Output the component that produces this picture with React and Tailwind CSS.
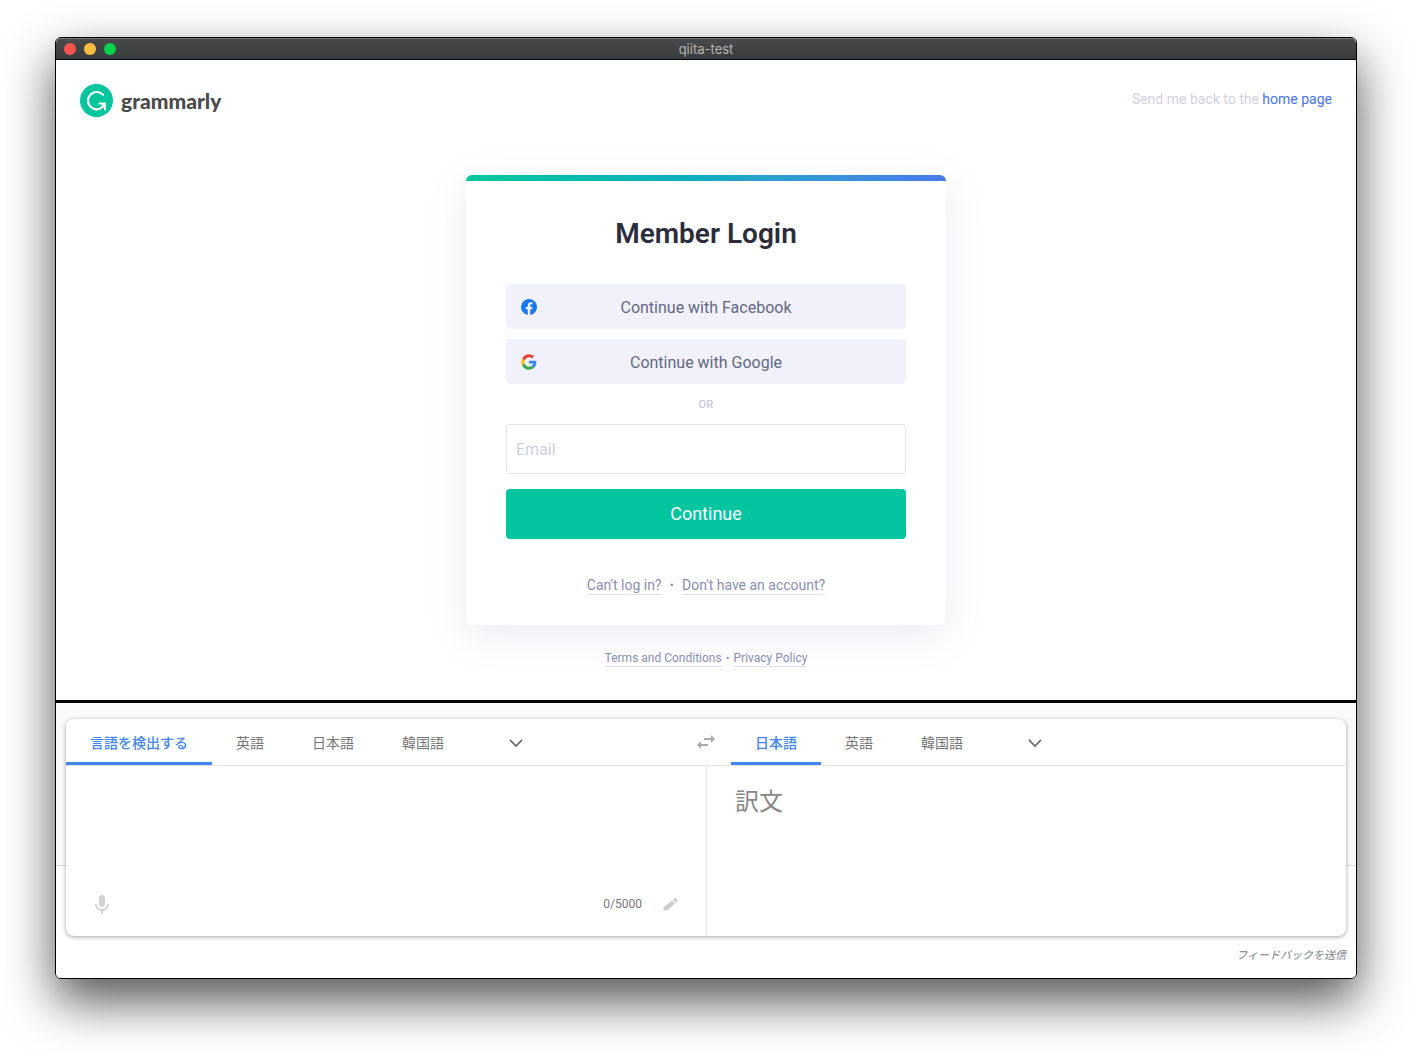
import React from 'react';
import { MdMic, MdSwapHoriz } from 'react-icons/md';

const sourceTabs = ['言語を検出する', '英語', '日本語', '韓国語'];
const targetTabs = ['日本語', '英語', '韓国語'];

function TitleBar() {
  return (
    <header className="relative flex h-[22px] items-center gap-2 rounded-t-[5px] border-b border-black bg-linear-to-b from-[#484a4b] to-[#3a3b3c] px-2 shadow-[inset_0_1px_0_#777879]">
      <button aria-label="Close" className="size-3 rounded-full bg-[#ff544d]" />
      <button aria-label="Minimize" className="size-3 rounded-full bg-[#ffbd3f]" />
      <button aria-label="Zoom" className="size-3 rounded-full bg-[#00d04b]" />
      <span className="pointer-events-none absolute inset-x-0 text-center font-[Inter] text-[13px] leading-5 text-[#b4b5b5]">
        qiita-test
      </span>
    </header>
  );
}

function Logo() {
  return (
    <a href="#" className="flex items-center gap-2">
      <svg viewBox="0 0 33 33" className="size-[33px]" fill="none">
        <circle cx="16.5" cy="16.5" r="16.5" fill="#00c59d" />
        <path d="M23.2 10.9A8.7 8.7 0 1 0 22.6 23" stroke="#fff" strokeWidth="2.1" strokeLinecap="round" />
        <path d="M18.6 18.6H26V26.2H24.1V22.9L22.4 24.6L20.8 23.1L22.6 20.6H18.6Z" fill="#fff" />
      </svg>
      <span className="font-[Lato] text-[21px] leading-6 font-black text-[#4a4a4a]">grammarly</span>
    </a>
  );
}

function FacebookIcon() {
  return (
    <svg viewBox="0 0 16 16" className="size-4">
      <path
        fill="#1877f2"
        d="M16 8a8 8 0 1 0-9.25 7.9v-5.59H4.72V8h2.03V6.24c0-2 1.2-3.11 3.02-3.11.88 0 1.79.15 1.79.15v1.97h-1c-1 0-1.31.62-1.31 1.25V8h2.22l-.36 2.31H9.25v5.6A8 8 0 0 0 16 8z"
      />
    </svg>
  );
}

function GoogleIcon() {
  return (
    <svg viewBox="-1 -1 50 50" className="size-4">
      <path
        fill="#ea4335"
        d="M24 9.5c3.54 0 6.71 1.22 9.21 3.6l6.85-6.85C35.9 2.38 30.47 0 24 0 14.62 0 6.51 5.38 2.56 13.22l7.98 6.19C12.43 13.72 17.74 9.5 24 9.5z"
      />
      <path
        fill="#4285f4"
        d="M46.98 24.55c0-1.57-.15-3.09-.38-4.55H24v9.02h12.94c-.58 2.96-2.26 5.48-4.78 7.18l7.73 6c4.51-4.18 7.09-10.36 7.09-17.65z"
      />
      <path
        fill="#fbbc05"
        d="M10.53 28.59c-.48-1.45-.76-2.99-.76-4.59s.27-3.14.76-4.59l-7.98-6.19C.92 16.46 0 20.12 0 24c0 3.88.92 7.54 2.56 10.78l7.97-6.19z"
      />
      <path
        fill="#34a853"
        d="M24 48c6.48 0 11.93-2.13 15.89-5.81l-7.73-6c-2.15 1.45-4.92 2.3-8.16 2.3-6.26 0-11.57-4.22-13.47-9.91l-7.98 6.19C6.51 42.62 14.62 48 24 48z"
      />
    </svg>
  );
}

function SocialButton({ icon, children }) {
  return (
    <button className="flex h-[45px] w-full items-center rounded bg-[#f1f1fb] px-[15px] text-[#646882]">
      {icon}
      <span className="flex-1 pt-0.5 pr-4 text-center text-base">{children}</span>
    </button>
  );
}

function TextLink({ children }) {
  return (
    <a href="#" className="border-b border-[#dfe0f0]">
      {children}
    </a>
  );
}

function LoginCard() {
  return (
    <form className="w-[480px] overflow-hidden rounded-md bg-white shadow-[0_10px_40px_rgba(109,120,167,0.14)]">
      <div className="h-1.5 bg-linear-to-r from-[#00c79c] via-[#10acbf] to-[#4a78ee]" />
      <div className="px-10 pt-[33px] pb-[30px]">
        <h1 className="text-center text-[28px] leading-10 font-semibold text-[#2b2d3c]">Member Login</h1>
        <div className="mt-[30px] flex flex-col gap-2.5">
          <SocialButton icon={<FacebookIcon />}>Continue with Facebook</SocialButton>
          <SocialButton icon={<GoogleIcon />}>Continue with Google</SocialButton>
        </div>
        <p className="h-10 text-center text-[11px] leading-[42px] font-medium tracking-wide text-[#c6c9e0]">OR</p>
        <input
          type="email"
          aria-label="Email"
          placeholder="Email"
          className="block h-[50px] w-full rounded-[3px] border border-[#e4e4f2] px-[9px] text-base outline-none placeholder:text-[#cdd0e2]"
        />
        <button className="mt-[15px] h-[50px] w-full rounded bg-[#00c59f] text-lg text-white">Continue</button>
        <p className="mt-[37px] flex justify-center gap-2 text-sm leading-[18px] text-[#8a8fb2]">
          <TextLink>Can't log in?</TextLink>
          <span className="font-black">·</span>
          <TextLink>Don't have an account?</TextLink>
        </p>
      </div>
    </form>
  );
}

function LoginPage() {
  return (
    <section className="flex flex-col items-center bg-white px-6 pt-6 pb-[33px] font-[Roboto]">
      <div className="flex w-full items-center justify-between">
        <Logo />
        <p className="pb-[3px] text-sm text-[#d0d2e4]">
          Send me back to the{' '}
          <a href="#" className="text-[#4a72ee]">
            home page
          </a>
        </p>
      </div>
      <div className="mt-[58px]">
        <LoginCard />
      </div>
      <p className="mt-[25px] flex gap-1 text-xs leading-4 text-[#8a8fb2]">
        <TextLink>Terms and Conditions</TextLink>
        <span className="font-black">·</span>
        <TextLink>Privacy Policy</TextLink>
      </p>
    </section>
  );
}

function LanguageTabs({ tabs }) {
  return (
    <div className="flex flex-1 items-stretch text-sm">
      {tabs.map((tab, i) => (
        <button
          key={tab}
          className={`border-b-3 px-6 pt-[5px] ${i === 0 ? 'border-[#4285f4] font-medium text-[#4285f4]' : 'border-transparent text-[#777]'}`}
        >
          {tab}
        </button>
      ))}
      <button aria-label="More languages" className="px-[38px] pt-0.5 text-[#6f6f6f]">
        <svg viewBox="0 0 24 24" className="size-5" fill="currentColor">
          <path d="M5.41 7.59 4 9l8 8 8-8-1.41-1.41L12 14.17z" />
        </svg>
      </button>
    </div>
  );
}

function Translator() {
  return (
    <section className="relative border-t-3 border-black bg-white px-2.5 pt-4 pb-3.5 font-['Roboto','Noto_Sans_CJK_JP',sans-serif]">
      <div className="absolute inset-x-0 top-0 h-[163px] border-b border-[#dcdcdc] bg-[#fafafa]" />
      <div className="relative rounded-lg bg-white shadow-[0_1px_4px_rgba(0,0,0,0.37)]">
        <div className="flex h-[47px] overflow-hidden rounded-t-lg border-b border-[#e0e0e0]">
          <LanguageTabs tabs={sourceTabs} />
          <button aria-label="Swap languages" className="w-[50px] text-[#aaa]">
            <MdSwapHoriz className="mx-auto size-6" />
          </button>
          <LanguageTabs tabs={targetTabs} />
        </div>
        <div className="grid h-[170px] grid-cols-2">
          <div className="flex flex-col">
            <textarea aria-label="原文" className="w-full flex-1 resize-none px-7 pt-4 text-2xl outline-none" />
            <div className="flex h-16 items-center pr-[26px] pl-6">
              <button aria-label="音声入力" className="pt-0.5 text-[#d2d2d2]">
                <MdMic className="size-6" />
              </button>
              <span className="ml-auto text-xs text-[#777]">0/5000</span>
              <button aria-label="手書き" className="ml-5 text-[#ccc]">
                <svg viewBox="0 0 18 18" className="size-[18px]" fill="currentColor">
                  <path d="M1.5 12.7v2.8h3.3L13 8.6 9.9 5.5zM10.9 4.7l3.1 3.1 1.6-1.4a.9.9 0 0 0 0-1.3l-1.9-1.9a.9.9 0 0 0-1.2 0z" />
                </svg>
              </button>
            </div>
          </div>
          <div className="border-l border-[#e0e0e0] px-7 pt-[18px] text-2xl leading-9 text-[#888]">訳文</div>
        </div>
      </div>
      <p className="relative mt-3 text-right text-[11px] leading-4 text-[#777e85] italic">
        <a href="#">フィードバックを送信</a>
      </p>
    </section>
  );
}

export default function App() {
  return (
    <div className="min-h-screen overflow-hidden bg-white px-[55px] pt-[37px] pb-[73px]">
      <main className="overflow-hidden rounded-[6px] border border-black shadow-[0_22px_50px_rgba(0,0,0,0.68)]">
        <TitleBar />
        <LoginPage />
        <Translator />
      </main>
    </div>
  );
}
